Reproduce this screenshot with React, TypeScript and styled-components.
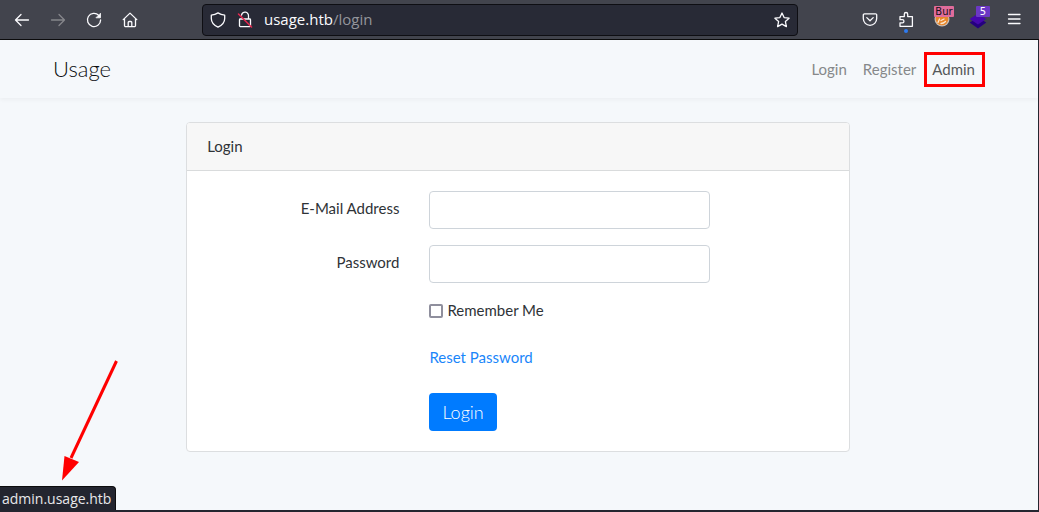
import React from 'react';
import styled, { createGlobalStyle } from 'styled-components';

const GlobalStyle = createGlobalStyle`
  *, *::before, *::after { box-sizing: border-box; }
  body { margin: 0; background: #242630; }
  button, input { font: inherit; }
`;

const Window = styled.div`
  display: flex;
  flex-direction: column;
  min-height: 100vh;
  font-family: Lato, "Open Sans", sans-serif;
  font-size: 15px;
  font-weight: 400;
  line-height: 23px;
  color: #2f3337;
`;

const Toolbar = styled.header`
  display: flex;
  align-items: center;
  height: 40px;
  padding: 0 17px 0 14px;
  background: #42444d;
  border-bottom: 1px solid #0c0c0d;
`;

const ToolGroup = styled.div<{ $gap: number }>`
  display: flex;
  align-items: center;
  gap: ${(p) => p.$gap}px;
`;

const ToolButton = styled.button<{ $dim?: boolean }>`
  position: relative;
  display: flex;
  width: 16px;
  height: 16px;
  padding: 0;
  border: 0;
  background: none;
  color: ${(p) => (p.$dim ? '#85868b' : '#fbfbfe')};
`;

const Icon = styled.svg`
  width: 16px;
  height: 16px;
  overflow: visible;
  fill: none;
  stroke: currentColor;
  stroke-width: 1.3;
  stroke-linecap: round;
  stroke-linejoin: round;
`;

const AddressBar = styled.div`
  display: flex;
  flex: 1;
  align-items: center;
  gap: 11px;
  height: 32px;
  margin: 0 64px;
  padding: 0 7px;
  border: 1px solid #0e0e13;
  border-radius: 4px;
  background: #282a36;
`;

const Url = styled.div`
  flex: 1;
  font-family: "Open Sans", "Noto Sans", sans-serif;
  font-size: 15px;
  color: #fbfbfe;
`;

const UrlPath = styled.span`
  color: #94959b;
`;

const Badge = styled.span<{ $color: string; $text: string; $width: number }>`
  position: absolute;
  top: -6px;
  right: -4px;
  width: ${(p) => p.$width}px;
  height: 11px;
  border-radius: 1px;
  background: ${(p) => p.$color};
  color: ${(p) => p.$text};
  font-family: "DejaVu Sans", sans-serif;
  font-size: 10px;
  line-height: 11px;
  text-align: center;
`;

const Page = styled.div`
  position: relative;
  display: flex;
  flex: 1;
  flex-direction: column;
  margin: 0 1px 2px 0;
  padding-right: 2px;
  background: #f5f8fb;
`;

const Navbar = styled.nav`
  margin-right: -2px;
  padding-right: 2px;
  box-shadow: 0 2px 4px rgba(0, 0, 0, 0.04);
`;

const NavInner = styled.div`
  display: flex;
  align-items: center;
  justify-content: space-between;
  max-width: 960px;
  min-height: 58px;
  margin: 0 auto;
  padding: 0 15px;
`;

const Brand = styled.a`
  color: #0c0e10;
  font-size: 22px;
  font-weight: 300;
  line-height: 30px;
  text-decoration: none;
`;

const NavLinks = styled.div`
  display: flex;
`;

const NavLink = styled.a<{ $active?: boolean }>`
  position: relative;
  padding: 8px;
  color: ${(p) => (p.$active ? '#55585b' : '#86888a')};
  text-decoration: none;
`;

const Highlight = styled.span`
  position: absolute;
  inset: 2px -2px 2px 0;
  border: 3px solid #ff0000;
`;

const Card = styled.main`
  width: calc(66.6667% - 27px);
  margin: 24px auto;
  overflow: hidden;
  border: 1px solid #dcdee0;
  border-radius: 4px;
  background: #fff;
`;

const CardHeader = styled.h1`
  margin: 0;
  padding: 12px 20px;
  border-bottom: 1px solid #d9dbdc;
  background: #f7f7f7;
  font-size: 15px;
  font-weight: 400;
`;

const Form = styled.form`
  display: flex;
  flex-direction: column;
  gap: 16px;
  padding: 20px;
`;

const Row = styled.div`
  display: grid;
  grid-template-columns: 4fr 6fr 2fr;
  & > * { margin: 0 15px; min-width: 0; }
`;

const FieldLabel = styled.label`
  padding-top: 6px;
  text-align: right;
`;

const TextInput = styled.input`
  width: auto;
  height: 38px;
  padding: 6px 12px;
  border: 1px solid #ced4da;
  border-radius: 4px;
  background: #fff;
`;

const Stack = styled.div`
  grid-column: 2;
  display: flex;
  flex-direction: column;
  align-items: flex-start;
  gap: 24px;
`;

const CheckLabel = styled.label`
  display: flex;
  align-items: center;
  gap: 4px;
`;

const Checkbox = styled.input`
  appearance: none;
  width: 14px;
  height: 14px;
  margin: 0;
  border: 2px solid #8f8f9d;
  border-radius: 2px;
  background: #fff;
  &:checked { background: #007bff; }
`;

const ResetLink = styled.a`
  color: #1a86fa;
  text-decoration: none;
`;

const SubmitButton = styled.button`
  height: 38px;
  padding: 0 13px;
  border: 0;
  border-radius: 4px;
  background: #007bff;
  color: #fff;
  font-size: 18px;
  font-weight: 300;
`;

const StatusBar = styled.div`
  position: absolute;
  left: 0;
  bottom: 0;
  height: 24px;
  padding: 0 4px 0 2px;
  border: 1px solid #0c0c0d;
  border-width: 1px 1px 0 0;
  border-radius: 0 4px 0 0;
  background: #23252f;
  color: #e8e8ea;
  font-family: "Open Sans", "Noto Sans", sans-serif;
  font-size: 14px;
`;

const Arrow = styled.svg`
  position: absolute;
  left: 60px;
  bottom: 28px;
  width: 60px;
  height: 124px;
`;

export default function App() {
  return (
    <Window>
      <GlobalStyle />
      <Toolbar>
        <ToolGroup $gap={20}>
          <ToolButton aria-label="Back">
            <Icon viewBox="0 0 16 16"><path d="M14.5 8h-13M7 2.5 1.5 8 7 13.5" /></Icon>
          </ToolButton>
          <ToolButton aria-label="Forward" $dim>
            <Icon viewBox="0 0 16 16"><path d="M1.5 8h13M9 2.5 14.5 8 9 13.5" /></Icon>
          </ToolButton>
          <ToolButton aria-label="Reload">
            <Icon viewBox="0 0 16 16">
              <path d="M12.8 3.4A6.6 6.6 0 1 0 14.6 8" />
              <path d="M14.5 1.6v4.2h-4.2z" fill="currentColor" strokeWidth="0.8" />
            </Icon>
          </ToolButton>
          <ToolButton aria-label="Home">
            <Icon viewBox="0 0 16 16">
              <path d="M1.2 7.6 8 1.1l6.8 6.5M2.5 6.6v6.9a1.2 1.2 0 0 0 1.2 1.2h8.6a1.2 1.2 0 0 0 1.2-1.2V6.6M6.2 14.5v-4a1 1 0 0 1 1-1h1.6a1 1 0 0 1 1 1v4" />
            </Icon>
          </ToolButton>
        </ToolGroup>
        <AddressBar>
          <ToolButton aria-label="Tracking protection">
            <Icon viewBox="0 0 16 16">
              <path d="M8 .9c2 1.3 4.2 2 6.7 2.3v3.3c0 4-2.5 6.7-6.7 8.7C3.8 13.2 1.3 10.5 1.3 6.5V3.2C3.8 2.9 6 2.2 8 .9z" />
            </Icon>
          </ToolButton>
          <ToolButton aria-label="Connection is not secure">
            <Icon viewBox="0 0 16 16">
              <path d="M4.500 3.200a3.500 3.500 0 0 1 7 1V7M3.300 7h9.400a.8.800 0 0 1 .8.800v6a.8.800 0 0 1-.8.800H3.300a.8.800 0 0 1-.8-.8v-6a.8.800 0 0 1 .8-.8z" />
              <path d="M1.500 2 14.500 15" stroke="#e22850" strokeWidth="1.600" />
            </Icon>
          </ToolButton>
          <Url>usage.htb<UrlPath>/login</UrlPath></Url>
          <ToolButton aria-label="Bookmark this page">
            <Icon viewBox="0 0 16 16">
              <path d="m8 1 2.1 4.6 5 .6-3.7 3.4 1 5L8 12.1l-4.4 2.5 1-5L.9 6.2l5-.6z" />
            </Icon>
          </ToolButton>
        </AddressBar>
        <ToolGroup $gap={20}>
          <ToolButton aria-label="Save to Pocket">
            <Icon viewBox="0 0 16 16">
              <path d="M2.500 1.800h11a1.200 1.200 0 0 1 1.200 1.200v3.600a6.700 6.700 0 0 1-13.400 0V3a1.200 1.200 0 0 1 1.200-1.200zM4.800 5.600 8 8.700l3.200-3.100" />
            </Icon>
          </ToolButton>
          <ToolButton aria-label="Extensions">
            <Icon viewBox="0 0 16 16">
              <path d="M2 14.300v-3.500h2.400a1.500 1.500 0 0 0 0-3.100H2V4.600h4.300V2.200a1.700 1.700 0 0 1 3.400 0v2.400h4.700v9.700z" />
              <circle cx="8" cy="19" r="2" fill="#2e7bf0" stroke="none" />
            </Icon>
          </ToolButton>
          <ToolButton aria-label="Burp proxy">
            <Icon viewBox="0 0 16 16">
              <circle cx="8" cy="7" r="7.500" fill="#c9bdb5" stroke="none" />
              <circle cx="8" cy="7" r="6.300" fill="#e8862a" stroke="none" />
              <path d="M4 10.500 5.500 7M7 8.500l3-1.500M7 11.500c2 0 3-.5 4.500-2" stroke="#fbe7cf" />
            </Icon>
            <Badge $color="#e06c9b" $text="#17101a" $width={20}>Bur</Badge>
          </ToolButton>
          <ToolButton aria-label="Wappalyzer">
            <Icon viewBox="0 0 16 16" stroke="none">
              <path d="m8 5.500 8.300 5-8.300 6-8.300-6z" fill="#25007f" stroke="none" />
              <path d="m8 1.500 8.300 5.500L8 12.500-.3 7z" fill="#4608ad" stroke="none" />
            </Icon>
            <Badge $color="#6b38c4" $text="#ffffff" $width={14}>5</Badge>
          </ToolButton>
          <ToolButton aria-label="Menu">
            <Icon viewBox="0 0 16 16"><path d="M2.500 2.500h11.500M2.500 7h11.500M2.500 11.500h11.500" /></Icon>
          </ToolButton>
        </ToolGroup>
      </Toolbar>

      <Page>
        <Navbar>
          <NavInner>
            <Brand href="#">Usage</Brand>
            <NavLinks>
              <NavLink href="#login">Login</NavLink>
              <NavLink href="#register">Register</NavLink>
              <NavLink href="#admin" $active>Admin<Highlight /></NavLink>
            </NavLinks>
          </NavInner>
        </Navbar>

        <Card>
          <CardHeader>Login</CardHeader>
          <Form onSubmit={(e) => e.preventDefault()}>
            <Row>
              <FieldLabel htmlFor="email">E-Mail Address</FieldLabel>
              <TextInput id="email" type="email" />
            </Row>
            <Row>
              <FieldLabel htmlFor="password">Password</FieldLabel>
              <TextInput id="password" type="password" />
            </Row>
            <Row>
              <Stack>
                <CheckLabel><Checkbox type="checkbox" />Remember Me</CheckLabel>
                <ResetLink href="#reset">Reset Password</ResetLink>
                <SubmitButton type="submit">Login</SubmitButton>
              </Stack>
            </Row>
          </Form>
        </Card>

        <Arrow viewBox="0 0 60 124">
          <path d="M56.500 3 11 100" stroke="#ff0000" strokeWidth="3" />
          <path d="M2 122.500 4.500 98 19 104z" fill="#ff0000" />
        </Arrow>
        <StatusBar>admin.usage.htb</StatusBar>
      </Page>
    </Window>
  );
}
